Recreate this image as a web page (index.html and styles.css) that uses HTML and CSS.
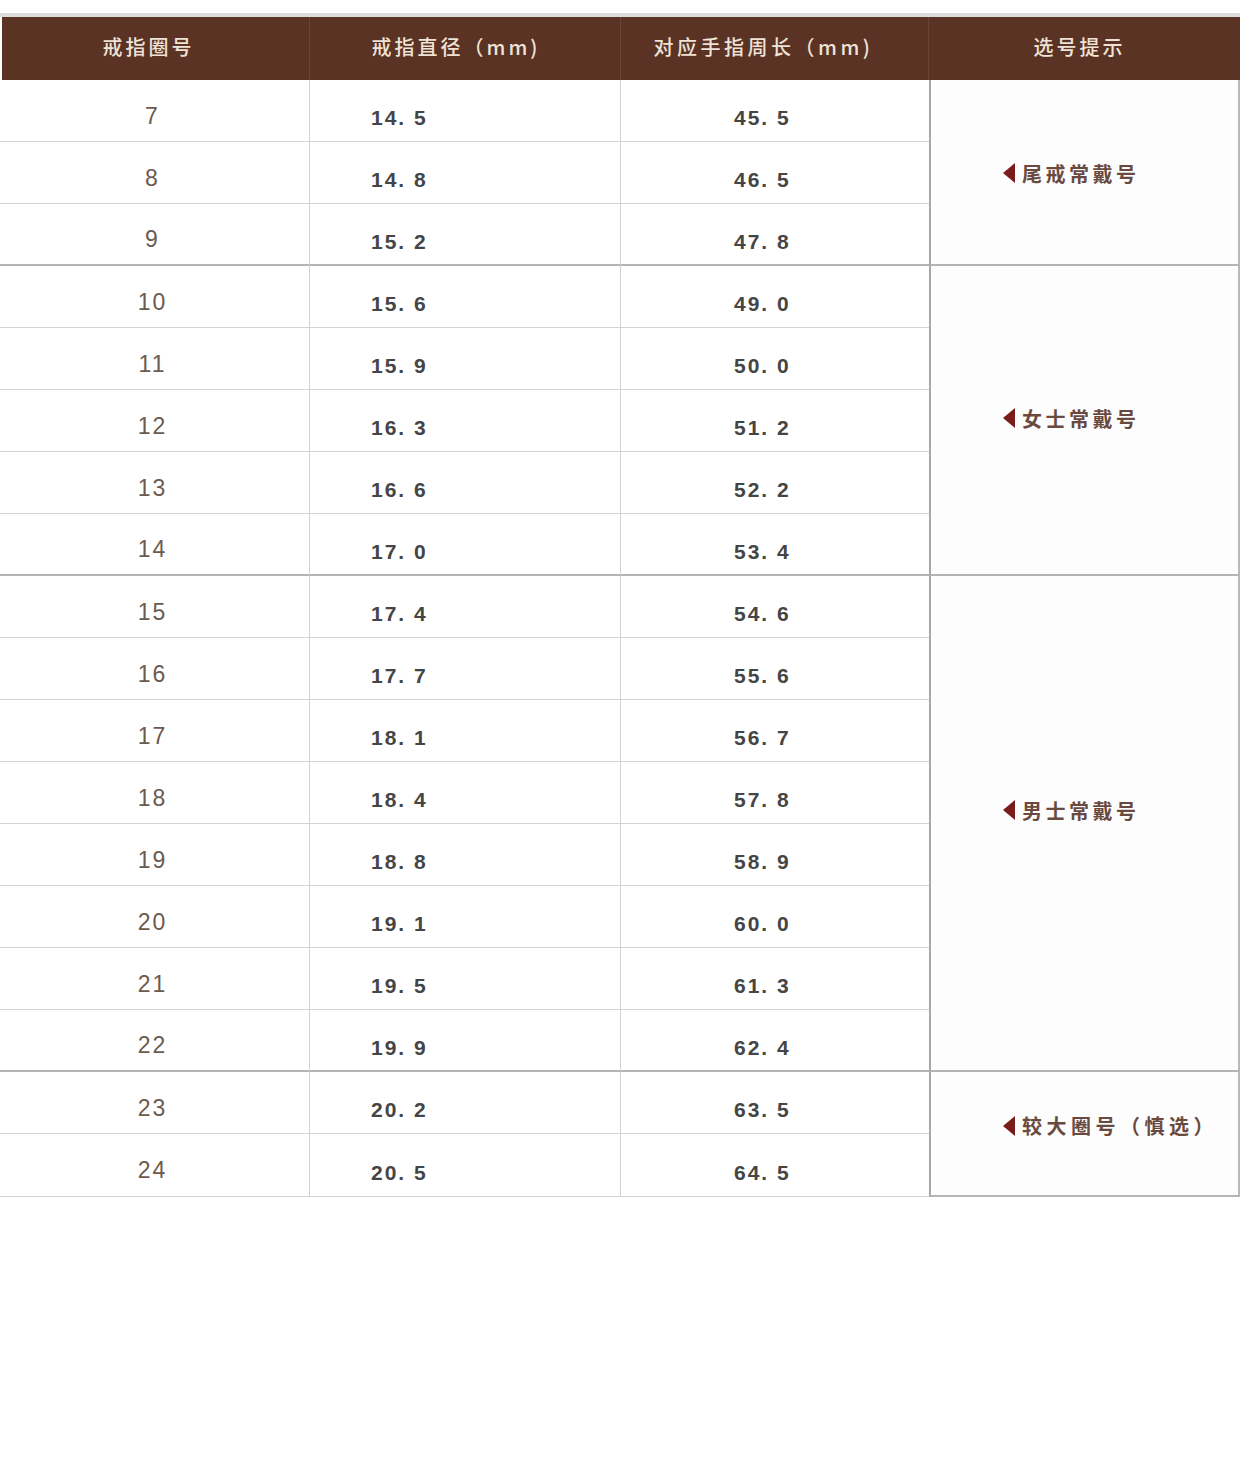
FILE: index.html
```html
<!DOCTYPE html>
<html lang="zh-CN">
<head>
<meta charset="utf-8">
<title>戒指尺码表</title>
<link rel="stylesheet" href="styles.css">
</head>
<body>
<div class="topline"></div>
<div class="chart">
  <div class="th c1">戒指圈号</div>
  <div class="th c2">戒指直径（mm)</div>
  <div class="th c3">对应手指周长（mm)</div>
  <div class="th c4">选号提示</div>

  <div class="n">7</div><div class="d">14. 5</div><div class="p">45. 5</div>
  <div class="tip tail" style="grid-row: span 3"><span class="arrow"></span>尾戒常戴号</div>
  <div class="n">8</div><div class="d">14. 8</div><div class="p">46. 5</div>
  <div class="n g">9</div><div class="d g">15. 2</div><div class="p g">47. 8</div>

  <div class="n">10</div><div class="d">15. 6</div><div class="p">49. 0</div>
  <div class="tip women" style="grid-row: span 5"><span class="arrow"></span>女士常戴号</div>
  <div class="n">11</div><div class="d">15. 9</div><div class="p">50. 0</div>
  <div class="n">12</div><div class="d">16. 3</div><div class="p">51. 2</div>
  <div class="n">13</div><div class="d">16. 6</div><div class="p">52. 2</div>
  <div class="n g">14</div><div class="d g">17. 0</div><div class="p g">53. 4</div>

  <div class="n">15</div><div class="d">17. 4</div><div class="p">54. 6</div>
  <div class="tip men" style="grid-row: span 8"><span class="arrow"></span>男士常戴号</div>
  <div class="n">16</div><div class="d">17. 7</div><div class="p">55. 6</div>
  <div class="n">17</div><div class="d">18. 1</div><div class="p">56. 7</div>
  <div class="n">18</div><div class="d">18. 4</div><div class="p">57. 8</div>
  <div class="n">19</div><div class="d">18. 8</div><div class="p">58. 9</div>
  <div class="n">20</div><div class="d">19. 1</div><div class="p">60. 0</div>
  <div class="n">21</div><div class="d">19. 5</div><div class="p">61. 3</div>
  <div class="n g">22</div><div class="d g">19. 9</div><div class="p g">62. 4</div>

  <div class="n">23</div><div class="d">20. 2</div><div class="p">63. 5</div>
  <div class="tip last" style="grid-row: span 2"><span class="arrow"></span>较大圈号（慎选）</div>
  <div class="n">24</div><div class="d">20. 5</div><div class="p">64. 5</div>
</div>
</body>
</html>
```
FILE: styles.css
```css
html, body {
  margin: 0;
  padding: 0;
  background: #ffffff;
}
body {
  width: 1240px;
  font-family: "Liberation Sans", "Noto Sans CJK SC", sans-serif;
}
.topline {
  margin-top: 13px;
  height: 4px;
  background: #dcdcdc;
}
.chart {
  display: grid;
  grid-template-columns: 310px 311px 308px 311px;
  grid-template-rows: 63px repeat(17, 62px) 63px;
}
.th {
  background: #5a3325;
  color: #efe3d6;
  font-family: "Noto Sans CJK SC", sans-serif;
  font-weight: 500;
  font-size: 20px;
  letter-spacing: 3px;
  display: flex;
  align-items: center;
  justify-content: center;
  padding-bottom: 4px;
  box-sizing: border-box;
  border-right: 1px solid #6a4436;
}
.th.c1 { margin-left: 2px; padding-right: 14px; }
.th.c2 { padding-right: 18px; }
.th.c3 { padding-right: 22px; letter-spacing: 3.5px; }
.th.c4 { border-right: none; padding-right: 10px; }
.n, .d, .p {
  border-bottom: 1px solid #d2d2d2;
  border-right: 1px solid #d2d2d2;
  display: flex;
  align-items: center;
  box-sizing: border-box;
}
.n.g, .d.g, .p.g {
  border-bottom: 2px solid #b4b4b4;
}
.n {
  justify-content: center;
  padding-top: 11px;
  padding-right: 4px;
  color: #6c5a4f;
  font-size: 23px;
  letter-spacing: 2px;
}
.d, .p {
  padding-top: 15px;
  color: #454545;
  font-size: 21px;
  font-weight: bold;
  letter-spacing: 2px;
}
.d { padding-left: 61px; }
.p { padding-left: 113px; border-right: none; }
.tip {
  grid-column: 4;
  background: #fdfdfd;
  border-left: 2px solid #a8a8a8;
  border-right: 2px solid #b8b8b8;
  border-bottom: 2px solid #b4b4b4;
  box-sizing: border-box;
  display: flex;
  align-items: center;
  justify-content: flex-start;
  padding-left: 72px;
  color: #6a4a3e;
  font-family: "Noto Sans CJK SC", sans-serif;
  font-weight: bold;
  font-size: 20px;
  letter-spacing: 3.5px;
}
.tip.tail { padding-top: 2px; }
.tip.women { padding-bottom: 4px; }
.tip.men { padding-bottom: 26px; }
.tip.last { padding-bottom: 16px; letter-spacing: 4.5px; }
.arrow {
  display: inline-block;
  width: 0;
  height: 0;
  border-top: 10px solid transparent;
  border-bottom: 10px solid transparent;
  border-right: 12px solid #7a1c1c;
  margin-right: 7px;
}
```
